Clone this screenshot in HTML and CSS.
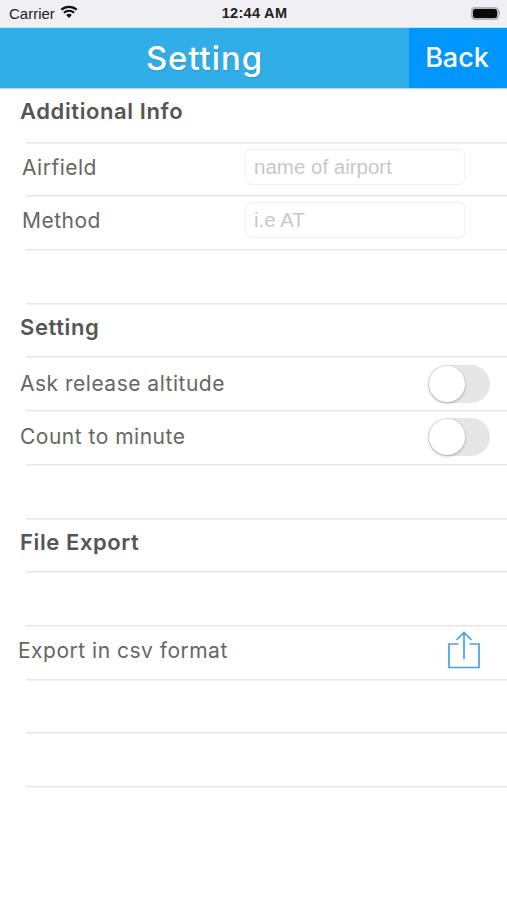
FILE: index.html
```html
<!DOCTYPE html>
<html lang="en">
<head>
<meta charset="utf-8">
<title>Setting</title>
<link rel="stylesheet" href="styles.css">
</head>
<body>
<div class="status">
  <div class="status-left">
    <span>Carrier</span>
    <svg class="wifi" width="18" height="14" viewBox="0 0 18 13"><path d="M9 12.600 6.200 9.400a4.200 4.200 0 0 1 5.600 0z" fill="#111"/><path d="M3.900 7.200a7.600 7.600 0 0 1 10.200 0M1.300 4.300a11.400 11.400 0 0 1 15.400 0" fill="none" stroke="#111" stroke-width="2.200"/></svg>
  </div>
  <div class="status-time">12:44 AM</div>
  <div class="status-right">
    <div class="battery"><div class="battery-fill"></div></div>
    <div class="battery-tip"></div>
  </div>
</div>
<header class="nav">
  <div class="nav-title">Setting</div>
  <div class="nav-back">Back</div>
</header>
<main>
  <div class="row head first"><span class="heading">Additional Info</span></div>
  <div class="sep"></div>
  <div class="row field"><span class="label inset">Airfield</span><div class="input">name of airport</div></div>
  <div class="sep"></div>
  <div class="row field lower"><span class="label inset">Method</span><div class="input">i.e AT</div></div>
  <div class="sep"></div>
  <div class="row"></div>
  <div class="sep"></div>
  <div class="row head"><span class="heading">Setting</span></div>
  <div class="sep"></div>
  <div class="row"><span class="label">Ask release altitude</span><div class="toggle"><div class="knob"></div></div></div>
  <div class="sep"></div>
  <div class="row"><span class="label up">Count to minute</span><div class="toggle"><div class="knob"></div></div></div>
  <div class="sep"></div>
  <div class="row"></div>
  <div class="sep"></div>
  <div class="row head last"><span class="heading">File Export</span></div>
  <div class="sep"></div>
  <div class="row"></div>
  <div class="sep"></div>
  <div class="row export"><span class="label up2">Export in csv format</span>
    <svg class="share" width="34" height="38" viewBox="0 0 34 38"><path d="M11.500 13H2v23.500h30V13h-9.500M17 28V2M9.500 9 17 1.500 24.500 9" fill="none" stroke="#4a9fe8" stroke-width="1.700"/></svg>
  </div>
  <div class="sep"></div>
  <div class="row"></div>
  <div class="sep"></div>
  <div class="row"></div>
  <div class="sep"></div>
</main>
</body>
</html>
```
FILE: styles.css
```css
* { box-sizing: border-box; }
html, body { margin: 0; padding: 0; background: #fff; }
body { width: 507px; height: 900px; overflow: hidden; font-family: Inter, "Liberation Sans", Arial, sans-serif; color: #555; }

.status { height: 27px; background: #f0eff4; display: grid; grid-template-columns: 1fr auto 1fr; align-items: center; padding: 0 7px 1px 9px; font-size: 15px; color: #222; }
.status-left { display: flex; align-items: center; gap: 5px; font-family: "Liberation Sans", Arial, sans-serif; }
.wifi { margin-top: -2px; }
.status-time { font-family: "Liberation Sans", Arial, sans-serif; font-weight: 700; font-size: 14.500px; letter-spacing: .3px; }
.status-right { display: flex; justify-content: flex-end; align-items: center; }
.battery { width: 28px; height: 13px; border-radius: 4px; background: #b5b5b5; padding: 2px; }
.battery-fill { height: 100%; border-radius: 2.500px; background: #0a0a0a; }
.battery-tip { width: 1.500px; height: 4px; background: #aaa; border-radius: 0 1px 1px 0; }

.nav { height: 62px; display: flex; background: #31ade8; border-top: 1px solid #b5e3f7; border-bottom: 1px solid #a8def6; color: #fff; }
.nav-title { flex: 1; display: flex; align-items: center; justify-content: center; font-size: 33px; font-weight: 500; letter-spacing: .9px; padding-bottom: 1px; text-shadow: 1px 1px 2px rgba(0,0,0,.12); }
.nav-back { width: 98px; display: flex; align-items: center; justify-content: center; background: #0096fb; font-size: 27px; font-weight: 500; padding: 0 2px 2px 0; }

.row { height: 52.700px; display: flex; align-items: center; justify-content: space-between; padding-right: 17px; }
.sep { height: 1px; margin-left: 26px; background: #e6e6e6; box-shadow: 0 1px 0 #f3f3f3; }

.head { padding-left: 20px; padding-bottom: 7px; }
.head.first { padding-bottom: 9px; }
.head.last { padding-bottom: 5px; }
.heading { font-size: 22px; font-weight: 600; color: #555; letter-spacing: .6px; }
.label { font-size: 21px; color: #666; padding-left: 20px; white-space: nowrap; letter-spacing: .5px; }
.inset { padding-left: 22px; }
.up { padding-bottom: 2px; }
.up2 { padding-bottom: 4px; }
.export .label { padding-left: 18px; }
.export { padding-right: 26px; }
.export .share { margin-bottom: 4px; }

.field { justify-content: flex-start; padding-right: 42px; padding-bottom: 4px; }
.field.lower { padding-bottom: 5px; }
.field .label { width: 245px; }
.input { width: 220px; height: 36px; border: 1px solid #f0f0f0; border-radius: 6px; padding-left: 8px; display: flex; align-items: center; font-family: "Liberation Sans", Arial, sans-serif; font-size: 20.500px; color: #c8c8c8; }

.toggle { width: 62px; height: 38px; border-radius: 19px; background: #e6e6e6; padding: 0 0 0 1px; }
.knob { width: 36px; height: 36px; margin-top: 1px; border-radius: 50%; background: #fff; box-shadow: 0 1px 3px rgba(0,0,0,.3); }
```
